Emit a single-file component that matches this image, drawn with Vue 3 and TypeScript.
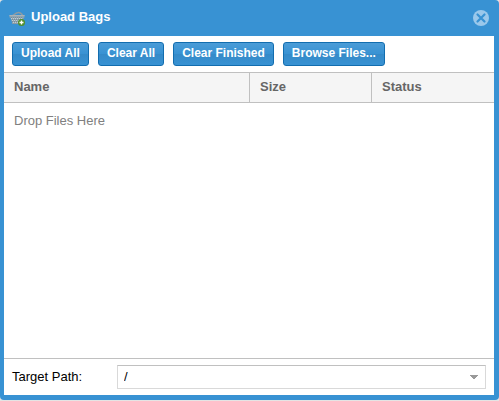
<script setup lang="ts">
import { ref } from 'vue'

const actions: string[] = ['Upload All', 'Clear All', 'Clear Finished', 'Browse Files...']
const columns: string[] = ['Name', 'Size', 'Status']
const paths: string[] = ['/']
const targetPath = ref('/')
</script>

<template>
  <div class="page">
    <section class="window" aria-labelledby="window-title">
      <header class="titlebar">
        <svg class="basket" viewBox="0 0 16 16" aria-hidden="true">
          <path d="M3 6C5 4.500 7 2.500 9.500 2.500S13 4 14 6" fill="none" stroke="#8d9ba3" stroke-width="1.400" />
          <path d="M0.500 5h15v2.500h-.8L13.500 14h-10L1.500 7.500h-1z" fill="#8fa5b2" />
          <path d="M0.500 5.500h15" stroke="#a9b3b8" stroke-width="1" />
          <path d="M2 7.500h12M3 9.500h11M3 11.500h10" stroke="#7b8d98" stroke-width="1" stroke-dasharray="1 1" />
          <path d="M2 8.500h12M3 10.500h10M4 12.500h8" stroke="#c0ccd3" stroke-width="1" stroke-dasharray="1 1" />
          <path d="M3.500 13.500h9" stroke="#8c9aa2" stroke-width="1" />
          <circle cx="12.500" cy="12.500" r="3.500" fill="#4f8f2c" />
          <path d="M12.500 10.500v4M10.500 12.500h4" stroke="#fff" stroke-width="1.400" />
        </svg>
        <h1 id="window-title">Upload Bags</h1>
        <button class="close" type="button" aria-label="Close">
          <svg viewBox="0 0 16 16" aria-hidden="true">
            <circle cx="8" cy="8" r="8" fill="#9ac8eb" />
            <path d="M4.500 4.500l7 7M11.500 4.500l-7 7" stroke="#3892d3" stroke-width="2.200" stroke-linecap="round" />
          </svg>
        </button>
      </header>

      <div class="body">
        <div class="toolbar">
          <button v-for="action in actions" :key="action" class="action" type="button">{{ action }}</button>
        </div>

        <div class="files">
          <table>
            <thead>
              <tr>
                <th v-for="column in columns" :key="column" scope="col">{{ column }}</th>
              </tr>
            </thead>
            <tbody>
              <tr>
                <td :colspan="columns.length">Drop Files Here</td>
              </tr>
            </tbody>
          </table>
        </div>

        <footer class="target">
          <label for="target-path">Target Path:</label>
          <div class="picker">
            <select id="target-path" v-model="targetPath">
              <option v-for="path in paths" :key="path" :value="path">{{ path }}</option>
            </select>
            <svg class="arrow" viewBox="0 0 8 4" aria-hidden="true">
              <path d="M0 0h8v1H7v1H6v1H5v1H3V3H2V2H1V1H0z" fill="#999" />
            </svg>
          </div>
        </footer>
      </div>
    </section>
  </div>
</template>

<style>
body {
  margin: 0;
  background: #e4e4e4;
}
</style>

<style scoped>
* {
  box-sizing: border-box;
}

.page {
  display: flex;
  min-height: 100vh;
  padding-bottom: 1px;
  font: 13px/16px "Liberation Sans", Arial, sans-serif;
}

.window {
  flex: 1;
  display: flex;
  flex-direction: column;
  padding: 0 5px 5px 4px;
  border-radius: 4px;
  background: #3892d3;
}

.titlebar {
  display: flex;
  align-items: center;
  gap: 6px;
  height: 36px;
  padding: 0 5px;
}

.basket {
  width: 16px;
  height: 16px;
}

h1 {
  flex: 1;
  margin: 0;
  padding-bottom: 3px;
  color: #fff;
  font-size: 13px;
  line-height: 16px;
}

.close {
  width: 16px;
  height: 16px;
  padding: 0;
  border: 0;
  background: none;
}

.close svg {
  display: block;
}

.body {
  flex: 1;
  display: flex;
  flex-direction: column;
  background: #fff;
}

.toolbar {
  display: flex;
  gap: 9px;
  padding: 6px 8px;
}

.action {
  height: 24px;
  padding: 0 8px 2px;
  border: 1px solid #126daf;
  border-radius: 3px;
  background: linear-gradient(#4b9cd7, #3892d3 50%, #358ac8 51%, #3892d3);
  color: #fff;
  font: bold 12px/16px "Liberation Sans", Arial, sans-serif;
}

.files {
  flex: 1;
  border-top: 1px solid #c0c0c0;
}

table {
  width: 100%;
  border-spacing: 0;
  table-layout: fixed;
}

th {
  width: 122px;
  height: 30px;
  padding: 0 10px 2px;
  border-right: 1px solid #c0c0c0;
  border-bottom: 1px solid #c0c0c0;
  background: #f5f5f5;
  color: #666;
  text-align: left;
}

th:first-child {
  width: auto;
}

th:last-child {
  border-right: 0;
}

td {
  padding: 10px;
  color: #808080;
}

.target {
  display: flex;
  align-items: center;
  gap: 5px;
  padding: 6px 8px;
  border-top: 1px solid #c0c0c0;
}

label {
  width: 100px;
  color: #000;
}

.picker {
  flex: 1;
  position: relative;
}

select {
  display: block;
  width: 100%;
  height: 24px;
  padding: 0 24px 0 6px;
  border: 1px solid #d9d9d9;
  border-top-color: #c0c0c0;
  border-radius: 0;
  background: #fff;
  color: #000;
  font: 13px/16px "Liberation Sans", Arial, sans-serif;
  appearance: none;
}

.arrow {
  position: absolute;
  top: 10px;
  right: 8px;
  width: 8px;
  height: 4px;
  pointer-events: none;
}
</style>
